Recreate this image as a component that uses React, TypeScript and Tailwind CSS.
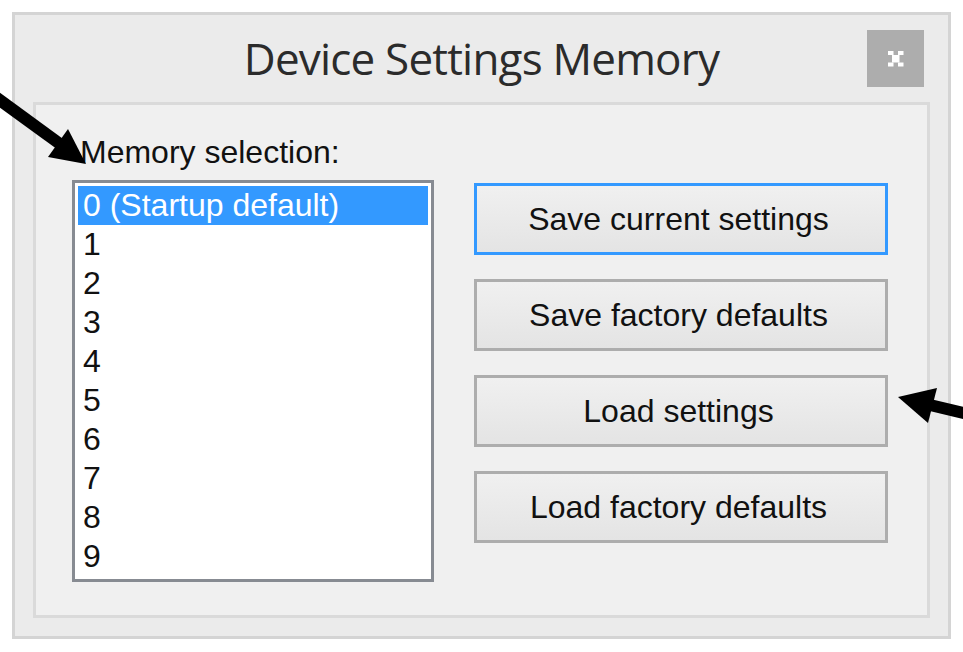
import React from "react";

const items = ["0 (Startup default)", "1", "2", "3", "4", "5", "6", "7", "8", "9"];
const buttons = [
  { label: "Save current settings", focused: true },
  { label: "Save factory defaults", focused: false },
  { label: "Load settings", focused: false },
  { label: "Load factory defaults", focused: false },
];

export default function App() {
  return (
    <div className="relative w-[963px] h-[652px] bg-white overflow-hidden pl-[12px] pt-[12px] font-['Liberation_Sans',Arial,sans-serif]">
      <div className="relative flex flex-col w-[939px] h-[627px] border-[3px] border-[#d4d4d4] bg-[#ebebeb] px-[18px] pb-[18px]">
        <div className="h-[87px] flex justify-center pt-[13px] shrink-0">
          <h1 className="font-['Open_Sans',sans-serif] text-[44px] leading-[60px] tracking-[-0.8px] text-[#2b2b2b] font-normal">
            Device Settings Memory
          </h1>
        </div>
        <div className="absolute top-[15px] right-[24px] w-[57px] h-[57px] bg-[#adadad] flex items-center justify-center">
          <svg width="16" height="16" viewBox="0 0 16 16" className="block">
            <g fill="#ffffff">
              <rect x="0" y="0" width="5.5" height="4" />
              <rect x="10" y="0" width="5.5" height="4" />
              <rect x="4" y="4" width="7.5" height="7.5" />
              <rect x="0" y="11.5" width="5.5" height="4" />
              <rect x="10" y="11.5" width="5.5" height="4" />
            </g>
          </svg>
        </div>
        <div className="flex-1 border-[3px] border-[#dadada] bg-[#f0f0f0] pl-[36px] pt-[29px] flex flex-col">
          <div className="ml-[8px] h-[36px] leading-[36px] text-[32px] text-[#111111] mb-[10px]">
            Memory selection:
          </div>
          <div className="flex items-start">
            <div className="w-[362px] h-[402px] border-[3px] border-[#878b92] bg-white p-[3px] flex flex-col">
              {items.map((it, i) => (
                <div
                  key={it}
                  className={
                    i === 0
                      ? "h-[39px] leading-[39px] text-[32px] pl-[5px] bg-[#3399ff] text-white whitespace-nowrap"
                      : "h-[39px] leading-[39px] text-[32px] pl-[5px] text-[#111111] whitespace-nowrap"
                  }
                >
                  {it}
                </div>
              ))}
            </div>
            <div className="ml-[40px] mt-[3px] flex flex-col gap-[24px]">
              {buttons.map((b) => (
                <div
                  key={b.label}
                  className={
                    b.focused
                      ? "w-[414px] h-[72px] border-[3px] border-[#3399ff] bg-gradient-to-b from-[#f0f0f0] to-[#e4e4e4] flex items-center justify-center pr-[5px] text-[32px] text-[#111111] whitespace-nowrap"
                      : "w-[414px] h-[72px] border-[3px] border-[#adadad] bg-gradient-to-b from-[#f0f0f0] to-[#e4e4e4] flex items-center justify-center pr-[5px] text-[32px] text-[#111111] whitespace-nowrap"
                  }
                >
                  {b.label}
                </div>
              ))}
            </div>
          </div>
        </div>
      </div>
      <svg className="absolute left-0 top-0 pointer-events-none" width="963" height="652" viewBox="0 0 963 652">
        <line x1="-10" y1="93" x2="60" y2="144" stroke="#000" strokeWidth="12" />
        <polygon points="68,129 48,157 86,164" fill="#000" />
        <line x1="930" y1="405" x2="980" y2="417" stroke="#000" strokeWidth="12" />
        <polygon points="937,388 928,423 898,397" fill="#000" />
      </svg>
    </div>
  );
}
